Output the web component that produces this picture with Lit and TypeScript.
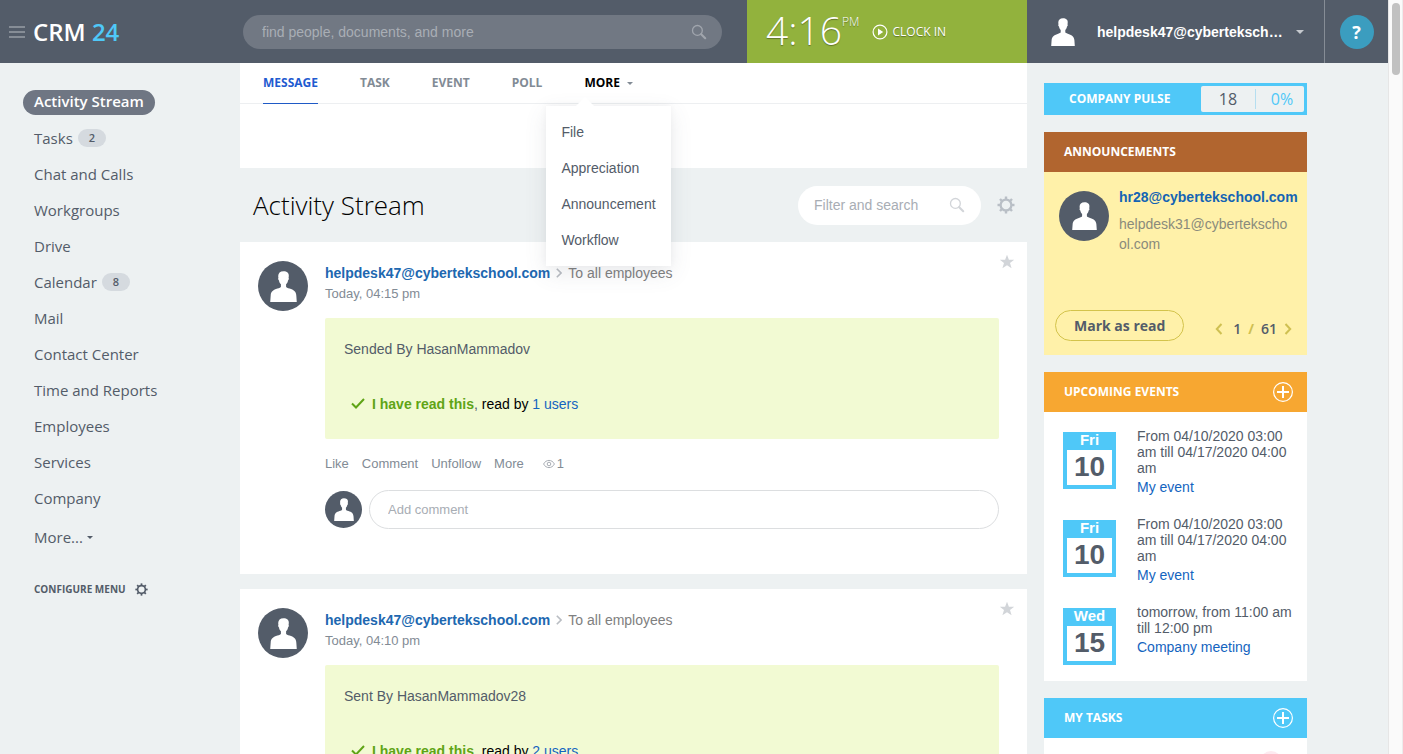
import { LitElement, html, css, svg } from "lit";
import { customElement, property } from "lit/decorators.js";
import { classMap } from "lit/directives/class-map.js";

const GEAR_TEETH = [0, 45, 90, 135, 180, 225, 270, 315];

const gear = (size: number) => html`<svg width=${size} height=${size} viewBox="0 0 18 18" aria-hidden="true">
  <circle cx="9" cy="9" r="5.4" fill="none" stroke="currentColor" stroke-width="2.3" />
  ${GEAR_TEETH.map(
    (a) => svg`<rect x="7.8" y="0.5" width="2.4" height="3" fill="currentColor" transform="rotate(${a} 9 9)" />`
  )}
</svg>`;

const magnifier = (size: number) => html`<svg width=${size} height=${size} viewBox="0 0 16 16" fill="none" stroke="currentColor" aria-hidden="true">
  <circle cx="6.4" cy="6.4" r="4.9" stroke-width="1.3" />
  <path d="M10.2 10.2 14.2 14.2" stroke-width="2.1" stroke-linecap="round" />
</svg>`;

const caret = html`<svg width="6" height="3" viewBox="0 0 6 3" aria-hidden="true"><path d="M0 0h6L3 3z" fill="currentColor" /></svg>`;

const plus = html`<svg width="22" height="22" viewBox="0 0 22 22" fill="none" stroke="#fff" aria-hidden="true">
  <circle cx="11" cy="11" r="9.4" stroke-width="1.2" />
  <path d="M11 5v12M5 11h12" stroke-width="2" />
</svg>`;

const PERSON =
  "M12 .2c-3 0-4.700 1.800-4.700 4.400 0 .7.1 1.300.2 1.800-.4.1-.4 1.700.5 2.100.2 1.500.8 2.600 1.700 3.400v2.300c0 .6-1.500 1.100-3.100 1.700C3 17.200.9 18.300.6 22.300L.2 28h23.600l-.4-5.700c-.3-4-2.400-5.100-6-6.400-1.600-.6-3.100-1.100-3.100-1.700v-2.300c.9-.8 1.500-1.900 1.700-3.400.9-.4.9-2 .5-2.100.1-.5.2-1.100.2-1.800C17.100 2 15 .2 12 .2z";

const person = (w: number, h: number) =>
  html`<svg width=${w} height=${h} viewBox="0 0 24 28" preserveAspectRatio="none" aria-hidden="true"><path d=${PERSON} fill="#fff" /></svg>`;

const base = css`
  *,
  *::before,
  *::after {
    box-sizing: border-box;
  }
  svg {
    display: block;
    flex: none;
  }
  button,
  input {
    font: inherit;
    color: inherit;
    background: none;
    border: 0;
    padding: 0;
    margin: 0;
    outline: 0;
  }
  a {
    text-decoration: none;
  }
  .avatar {
    display: flex;
    flex: none;
    align-items: center;
    justify-content: center;
    width: 50px;
    height: 50px;
    border-radius: 50%;
    background: #535c69;
  }
`;

@customElement("crm-header")
class CrmHeader extends LitElement {
  static styles = [
    base,
    css`
      :host {
        display: block;
        background: #535c69;
      }
      .bar {
        display: grid;
        grid-template-columns: 240px minmax(0, 1fr) 280px 297px 64px;
        height: 63px;
      }
      .brand {
        display: flex;
        align-items: center;
        gap: 8px;
        padding-left: 9px;
      }
      .burger {
        display: grid;
        gap: 3px;
        width: 16px;
      }
      .burger i {
        height: 2px;
        background: #868d96;
      }
      .logo {
        font: 600 24px/32px "Open Sans", sans-serif;
        color: #fff;
      }
      .logo span {
        color: #4fc8f8;
      }
      .search {
        display: flex;
        align-items: center;
        align-self: center;
        height: 34px;
        margin: 0 25px 0 3px;
        padding: 0 15px 0 19px;
        border-radius: 17px;
        background: #717883;
        color: #a0a5ad;
      }
      .search input {
        flex: 1;
        min-width: 0;
        font-size: 14px;
      }
      .search input::placeholder {
        color: #a9aeb5;
        opacity: 1;
      }
      .clock {
        display: flex;
        padding-left: 19px;
        background: #92b23d;
        color: #fff;
        font-family: "Open Sans", sans-serif;
        text-shadow: 0 1px 1px rgba(0, 0, 0, 0.35);
      }
      .time {
        font-size: 39px;
        font-weight: 300;
        line-height: 60px;
      }
      .pm {
        padding-top: 14px;
        font-size: 12px;
        line-height: 16px;
        font-weight: 300;
      }
      .clockin {
        display: flex;
        align-items: center;
        gap: 4px;
        margin-left: 13px;
        font-size: 12px;
        text-shadow: inherit;
      }
      .user {
        display: flex;
        align-items: center;
        padding-left: 24px;
        color: #fff;
        font-size: 14px;
        font-weight: 700;
        text-align: left;
      }
      .name {
        width: 190px;
        margin: 0 9px 0 22px;
        overflow: hidden;
        text-overflow: ellipsis;
        white-space: nowrap;
      }
      .user svg:last-child {
        color: #c5c9ce;
      }
      .help {
        display: flex;
        align-items: center;
        justify-content: center;
        border-left: 1px solid #868d96;
      }
      .help button {
        width: 34px;
        height: 34px;
        border-radius: 50%;
        background: #3b9dbf;
        color: #fff;
        font: 700 18px/34px "Open Sans", sans-serif;
      }
    `,
  ];

  render() {
    return html`<header class="bar">
      <div class="brand">
        <button class="burger" aria-label="Toggle menu"><i></i><i></i><i></i></button>
        <div class="logo">CRM <span>24</span></div>
      </div>
      <label class="search">
        <input type="text" aria-label="Search" placeholder="find people, documents, and more" />
        ${magnifier(16)}
      </label>
      <div class="clock">
        <span class="time">4:16</span><span class="pm">PM</span>
        <button class="clockin">
          <svg width="16" height="16" viewBox="0 0 16 16" aria-hidden="true">
            <circle cx="8" cy="8" r="6.9" fill="none" stroke="#fff" stroke-width="1.2" />
            <path d="M6 4.600 11.200 8 6 11.400z" fill="#fff" />
          </svg>
          CLOCK IN
        </button>
      </div>
      <button class="user">
        ${person(24, 28)}
        <span class="name">helpdesk47@cybertekschool.com</span>
        <svg width="8" height="4" viewBox="0 0 8 4" aria-hidden="true"><path d="M0 0h8L4 4z" fill="currentColor" /></svg>
      </button>
      <div class="help"><button aria-label="Help">?</button></div>
    </header>`;
  }
}

interface MenuItem {
  label: string;
  count?: number;
  active?: boolean;
}

@customElement("crm-menu")
class CrmMenu extends LitElement {
  static styles = [
    base,
    css`
      :host {
        display: block;
        padding: 22px 0 0 23px;
        font: 15px/25px "Open Sans", sans-serif;
        color: #535c69;
      }
      .item {
        display: flex;
        align-items: center;
        height: 36px;
        padding: 0 11px;
        color: inherit;
      }
      .active {
        width: max-content;
        height: 25px;
        margin: 5px 0;
        border-radius: 13px;
        background: #6f7683;
        color: #fff;
        font-weight: 600;
      }
      .active span {
        padding-bottom: 2px;
      }
      .count {
        width: 28px;
        margin-left: 5px;
        border-radius: 9px;
        background: #d5dadf;
        font-size: 11px;
        line-height: 18px;
        font-weight: 600;
        text-align: center;
      }
      .more {
        gap: 4px;
        margin-top: 3px;
      }
      .configure {
        gap: 9px;
        margin-top: 16px;
        font-size: 10px;
        font-weight: 700;
      }
    `,
  ];

  items: MenuItem[] = [
    { label: "Activity Stream", active: true },
    { label: "Tasks", count: 2 },
    { label: "Chat and Calls" },
    { label: "Workgroups" },
    { label: "Drive" },
    { label: "Calendar", count: 8 },
    { label: "Mail" },
    { label: "Contact Center" },
    { label: "Time and Reports" },
    { label: "Employees" },
    { label: "Services" },
    { label: "Company" },
  ];

  render() {
    return html`<nav>
      ${this.items.map(
        (i) => html`<a href="#" class=${classMap({ item: true, active: !!i.active })}
          ><span>${i.label}</span>${i.count ? html`<span class="count">${i.count}</span>` : ""}</a
        >`
      )}
      <button class="item more">More... ${caret}</button>
      <button class="item configure">CONFIGURE MENU ${gear(13)}</button>
    </nav>`;
  }
}

@customElement("crm-composer")
class CrmComposer extends LitElement {
  static styles = [
    base,
    css`
      :host {
        display: block;
        height: 105px;
        background: #fff;
      }
      .tabs {
        display: flex;
        gap: 42px;
        padding-left: 23px;
        border-bottom: 1px solid #edeff1;
        font: 700 12px/40px "Open Sans", sans-serif;
        color: #828b95;
      }
      .tab {
        margin-bottom: -1px;
        border-bottom: 1px solid transparent;
      }
      .current {
        border-color: #1f5ac6;
        color: #1f5bd0;
      }
      .moretab {
        position: relative;
      }
      .open {
        display: flex;
        align-items: center;
        gap: 7px;
        color: #000;
      }
      .open svg {
        color: #828b95;
      }
      .popup {
        position: absolute;
        z-index: 2;
        top: 43px;
        left: -38px;
        padding: 8px 15px;
        background: #fff;
        box-shadow: 0 7px 21px rgba(83, 92, 105, 0.12), 0 -1px 6px rgba(83, 92, 105, 0.06);
        font: 14px/36px "Liberation Sans", Arial, sans-serif;
        color: #535c69;
      }
      .popup::before {
        content: "";
        position: absolute;
        top: -9px;
        left: 30px;
        border: 9px solid transparent;
        border-top: 0;
        border-bottom-color: #fff;
      }
      .popup a {
        display: block;
        color: inherit;
      }
    `,
  ];

  render() {
    return html`<div class="tabs">
      <button class="tab current">MESSAGE</button>
      <button class="tab">TASK</button>
      <button class="tab">EVENT</button>
      <button class="tab">POLL</button>
      <div class="moretab">
        <button class="tab open">MORE ${caret}</button>
        <div class="popup">
          ${["File", "Appreciation", "Announcement", "Workflow"].map((t) => html`<a href="#">${t}</a>`)}
        </div>
      </div>
    </div>`;
  }
}

@customElement("crm-post")
class CrmPost extends LitElement {
  @property() time = "";
  @property() text = "";
  @property({ type: Number }) readers = 1;

  static styles = [
    base,
    css`
      :host {
        display: block;
        padding: 19px 28px 45px 18px;
        background: #fff;
      }
      .post {
        display: flex;
        gap: 17px;
      }
      .body {
        flex: 1;
        min-width: 0;
      }
      .head {
        display: flex;
        align-items: center;
        height: 24px;
        font-size: 14px;
      }
      .author {
        font-weight: 700;
        color: #2067b0;
      }
      .head svg {
        margin: 0 6px;
      }
      .to {
        color: #808080;
      }
      .star {
        align-self: flex-start;
        margin: -7px -16px 0 auto;
      }
      .head .star svg {
        margin: 0;
      }
      .when {
        font-size: 13px;
        line-height: 17px;
        color: #828b95;
      }
      .note {
        margin-top: 16px;
        padding: 21px 19px 25px;
        border-radius: 2px;
        background: #f2fad3;
        font-size: 14px;
        line-height: 20px;
        color: #535c69;
      }
      .note p {
        margin: 0;
      }
      .read {
        display: flex;
        align-items: center;
        padding: 35px 0 0 7px;
        color: #000;
      }
      .read svg {
        margin-right: 7px;
      }
      .read b {
        color: #5fa416;
      }
      .comma {
        color: #535c69;
      }
      .read a {
        color: #1464c0;
      }
      .actions {
        display: flex;
        align-items: center;
        gap: 13px;
        padding-top: 16px;
        font-size: 13px;
        line-height: 18px;
        color: #828b95;
      }
      .views {
        display: flex;
        align-items: center;
        gap: 2px;
        margin-left: 6px;
      }
      .comment {
        display: flex;
        align-items: center;
        gap: 7px;
        padding-top: 17px;
      }
      .small {
        width: 37px;
        height: 37px;
      }
      .comment input {
        flex: 1;
        min-width: 0;
        height: 39px;
        padding: 0 18px;
        border: 1px solid #dcdee0;
        border-radius: 20px;
        font-size: 13px;
      }
      .comment input::placeholder {
        color: #a8adb4;
        opacity: 1;
      }
    `,
  ];

  render() {
    return html`<article class="post">
      <span class="avatar">${person(27, 31)}</span>
      <div class="body">
        <div class="head">
          <a class="author" href="#">helpdesk47@cybertekschool.com</a>
          <svg width="6" height="10" viewBox="0 0 6 10" fill="none" stroke="#b9bdc3" stroke-width="1.6" aria-hidden="true">
            <path d="M.8.8 5 5 .8 9.200" />
          </svg>
          <span class="to">To all employees</span>
          <button class="star" aria-label="Favorite">
            <svg width="16" height="16" viewBox="0 0 16 16" aria-hidden="true">
              <path d="M8 .8l1.900 5h5.300l-4.200 3.300 1.600 5.200L8 11.200l-4.600 3.100L5 9.100.8 5.800h5.300z" fill="#d2d5d9" />
            </svg>
          </button>
        </div>
        <div class="when">Today, ${this.time}</div>
        <div class="note">
          <p>${this.text}</p>
          <div class="read">
            <svg width="14" height="12" viewBox="0 0 14 12" fill="none" stroke="#5fa416" stroke-width="2" aria-hidden="true">
              <path d="M1 5.500 5 9.500 13 1" />
            </svg>
            <span><b>I have read this</b><span class="comma">, </span>read by <a href="#">${this.readers} users</a></span>
          </div>
        </div>
        <div class="actions">
          <button>Like</button><button>Comment</button><button>Unfollow</button><button>More</button>
          <span class="views">
            <svg width="12" height="10" viewBox="0 0 12 10" fill="none" stroke="#a8adb4" aria-hidden="true">
              <path d="M.6 5C3 .2 9 .2 11.400 5 9 9.800 3 9.800.6 5z" />
              <circle cx="6" cy="5" r="1.8" />
            </svg>
            1
          </span>
        </div>
        <div class="comment">
          <span class="avatar small">${person(20, 23)}</span>
          <input type="text" aria-label="Add comment" placeholder="Add comment" />
        </div>
      </div>
    </article>`;
  }
}

@customElement("crm-feed")
class CrmFeed extends LitElement {
  static styles = [
    base,
    css`
      :host {
        display: block;
        min-width: 0;
      }
      .title {
        display: flex;
        align-items: center;
        height: 74px;
        padding: 0 12px 0 13px;
      }
      h1 {
        flex: 1;
        margin: 0;
        font: 300 26px/36px "Open Sans", sans-serif;
        color: #000;
      }
      .filter {
        display: flex;
        align-items: center;
        width: 183px;
        height: 39px;
        padding: 0 16px;
        border-radius: 20px;
        background: #fff;
        color: #d2d5d9;
      }
      .filter input {
        flex: 1;
        min-width: 0;
        font-size: 14px;
      }
      .filter input::placeholder {
        color: #a8adb4;
        opacity: 1;
      }
      .settings {
        margin-left: 16px;
        color: #b9bfc6;
      }
      .posts {
        display: grid;
        gap: 15px;
      }
    `,
  ];

  render() {
    return html`<crm-composer></crm-composer>
      <div class="title">
        <h1>Activity Stream</h1>
        <label class="filter">
          <input type="text" aria-label="Filter and search" placeholder="Filter and search" />
          ${magnifier(16)}
        </label>
        <button class="settings" aria-label="Settings">${gear(18)}</button>
      </div>
      <div class="posts">
        <crm-post time="04:15 pm" text="Sended By HasanMammadov" readers="1"></crm-post>
        <crm-post time="04:10 pm" text="Sent By HasanMammadov28" readers="2"></crm-post>
      </div>`;
  }
}

@customElement("crm-widgets")
class CrmWidgets extends LitElement {
  static styles = [
    base,
    css`
      :host {
        display: grid;
        grid-template-columns: minmax(0, 1fr);
        align-content: start;
        gap: 17px;
        padding: 20px 0 0 17px;
      }
      h2 {
        display: flex;
        align-items: center;
        justify-content: space-between;
        height: 40px;
        margin: 0;
        padding: 0 13px 0 20px;
        font: 700 12px/20px "Open Sans", sans-serif;
        color: #fff;
      }
      .pulse {
        display: flex;
        align-items: center;
        justify-content: space-between;
        height: 32px;
        padding: 0 3px 0 25px;
        background: #4fc8f8;
        color: #fff;
        font: 700 12px/20px "Open Sans", sans-serif;
      }
      .figures {
        display: flex;
        align-items: center;
        width: 103px;
        height: 26px;
        border-radius: 2px;
        background: #edf1f2;
        font-size: 16px;
        font-weight: 400;
        text-align: center;
      }
      .figures span {
        flex: 1;
        color: #535c69;
      }
      .figures span + span {
        flex: none;
        width: 49px;
        padding-left: 4px;
        border-left: 1px solid #b5def0;
        color: #4fc8f8;
      }
      .brown {
        background: #b1652f;
      }
      .orange {
        background: #f7a731;
      }
      .blue {
        background: #4fc8f8;
      }
      .note {
        display: flex;
        flex-direction: column;
        justify-content: space-between;
        height: 183px;
        padding: 15px 9px 14px 11px;
        background: #fff1a9;
      }
      .from {
        display: flex;
        gap: 10px;
        padding-left: 4px;
        font-size: 14px;
        line-height: 20px;
        color: #8a8b7c;
      }
      .from .avatar {
        margin-top: 4px;
      }
      .from div {
        min-width: 0;
      }
      .from a {
        display: block;
        font-weight: 700;
        color: #1464b4;
      }
      .from p {
        margin: 7px 0 0;
        padding-right: 8px;
        overflow-wrap: anywhere;
      }
      .foot {
        display: flex;
        align-items: center;
        justify-content: space-between;
        padding-right: 6px;
        font: 700 14px/20px "Open Sans", sans-serif;
        color: #535c69;
      }
      .mark {
        height: 31px;
        padding: 0 18px;
        border: 1px solid #d3c34b;
        border-radius: 16px;
      }
      .pager {
        display: flex;
        align-items: center;
        gap: 7px;
        padding-top: 6px;
        font-size: 14px;
        color: #cfc052;
      }
      .pager button:first-child {
        margin-right: 3px;
      }
      .pager b {
        color: #535c69;
        font-weight: 600;
      }
      .events {
        display: grid;
        gap: 21px;
        padding: 16px 11px 16px 19px;
        background: #fff;
        font-size: 14px;
        line-height: 16px;
      }
      .event {
        display: flex;
        gap: 21px;
      }
      .date {
        flex: none;
        width: 53px;
        height: 57px;
        margin-top: 4px;
        padding: 0 4px 4px;
        background: #4fc8f8;
        text-align: center;
        font-weight: 700;
        color: #fff;
      }
      .dow {
        height: 18px;
        font-size: 15px;
        line-height: 16px;
      }
      .day {
        height: 35px;
        background: #fff;
        color: #535c69;
        font-size: 28px;
        line-height: 34px;
      }
      .info {
        color: #535c69;
      }
      .info a {
        display: block;
        margin-top: 3px;
        line-height: 16px;
        color: #1464c0;
      }
      .tasks {
        height: 60px;
        padding: 13px 25px;
        background: #fff;
      }
      .badge {
        width: 22px;
        height: 22px;
        margin-left: auto;
        border-radius: 50%;
        background: #fdeaf0;
      }
    `,
  ];

  events = [
    { dow: "Fri", day: 10, when: "From 04/10/2020 03:00 am till 04/17/2020 04:00 am", name: "My event" },
    { dow: "Fri", day: 10, when: "From 04/10/2020 03:00 am till 04/17/2020 04:00 am", name: "My event" },
    { dow: "Wed", day: 15, when: "tomorrow, from 11:00 am till 12:00 pm", name: "Company meeting" },
  ];

  render() {
    return html`<div class="pulse">
        COMPANY PULSE
        <div class="figures"><span>18</span><span>0%</span></div>
      </div>
      <section>
        <h2 class="brown">ANNOUNCEMENTS</h2>
        <div class="note">
          <div class="from">
            <span class="avatar">${person(25, 28)}</span>
            <div>
              <a href="#">hr28@cybertekschool.com</a>
              <p>helpdesk31@cybertekschool.com</p>
            </div>
          </div>
          <div class="foot">
            <button class="mark">Mark as read</button>
            <div class="pager">
              <button aria-label="Previous">
                <svg width="8" height="12" viewBox="0 0 8 12" fill="none" stroke="currentColor" stroke-width="2" aria-hidden="true"><path d="M6.500 1 1.800 6l4.700 5" /></svg>
              </button>
              <b>1</b><span>/</span><b>61</b>
              <button aria-label="Next">
                <svg width="8" height="12" viewBox="0 0 8 12" fill="none" stroke="currentColor" stroke-width="2" aria-hidden="true"><path d="M1.500 1 6.200 6l-4.700 5" /></svg>
              </button>
            </div>
          </div>
        </div>
      </section>
      <section>
        <h2 class="orange">UPCOMING EVENTS <button aria-label="Add event">${plus}</button></h2>
        <div class="events">
          ${this.events.map(
            (e) => html`<div class="event">
              <div class="date"><div class="dow">${e.dow}</div><div class="day">${e.day}</div></div>
              <div class="info">${e.when}<a href="#">${e.name}</a></div>
            </div>`
          )}
        </div>
      </section>
      <section>
        <h2 class="blue">MY TASKS <button aria-label="Add task">${plus}</button></h2>
        <div class="tasks"><div class="badge"></div></div>
      </section>`;
  }
}

@customElement("app-root")
class AppRoot extends LitElement {
  static styles = [
    base,
    css`
      :host {
        display: flex;
        height: 100vh;
        overflow: hidden;
        background: #edf1f2;
        font: 14px/20px "Liberation Sans", Arial, sans-serif;
      }
      .page {
        flex: 1;
        min-width: 0;
      }
      .columns {
        display: grid;
        grid-template-columns: 240px minmax(0, 1fr) 280px 81px;
      }
      .scrollbar {
        flex: none;
        width: 15px;
        padding: 3px 2px 0 3px;
        border-left: 1px solid #e6e6e6;
        border-right: 1px solid #ececec;
        background: #fafafa;
      }
      .thumb {
        width: 8px;
        height: 72px;
        border-radius: 4px;
        background: #c1c1c1;
      }
    `,
  ];

  render() {
    return html`<div class="page">
        <crm-header></crm-header>
        <main class="columns">
          <crm-menu></crm-menu>
          <crm-feed></crm-feed>
          <crm-widgets></crm-widgets>
        </main>
      </div>
      <div class="scrollbar"><div class="thumb"></div></div>`;
  }
}
